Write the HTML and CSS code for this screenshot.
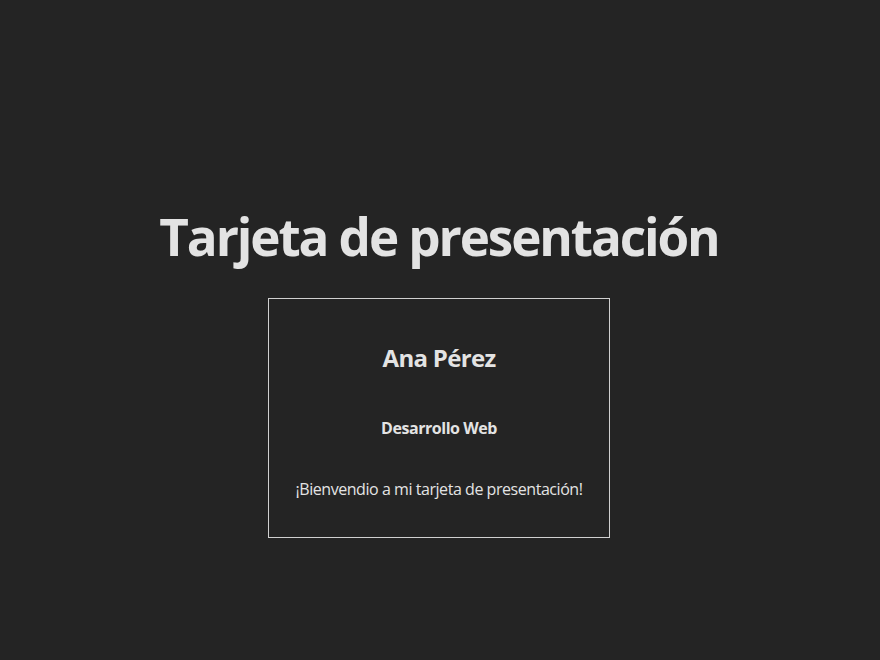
FILE: index.html
```html
<!DOCTYPE html>
<html lang="es">
<head>
<meta charset="utf-8">
<title>Tarjeta de presentación</title>
<link rel="stylesheet" href="styles.css">
</head>
<body>
<main class="page">
  <h1 class="title">Tarjeta de presentación</h1>
  <section class="card">
    <h2 class="card-name">Ana Pérez</h2>
    <h4 class="card-role">Desarrollo Web</h4>
    <p class="card-text">¡Bienvendio a mi tarjeta de presentación!</p>
  </section>
</main>
</body>
</html>
```

FILE: styles.css
```css
html, body {
  margin: 0;
  padding: 0;
  background: #242424;
}
body {
  font-family: "Open Sans", "Noto Sans", sans-serif;
  color: #e3e3e3;
  min-height: 100vh;
}
.page {
  display: flex;
  flex-direction: column;
  align-items: center;
  padding: 208px 2px 0 0;
  text-align: center;
}
.title {
  margin: 0 0 34px;
  font-size: 51.2px;
  line-height: 56px;
  font-weight: 700;
  letter-spacing: -2.1px;
}
.card {
  width: 300px;
  padding: 20px;
  border: 1px solid #d0d0d0;
}
.card-name {
  margin: 21px 0 40px;
  font-size: 24px;
  line-height: 36px;
  font-weight: 700;
  letter-spacing: -0.7px;
}
.card-role {
  margin: 0 0 37px;
  font-size: 16px;
  line-height: 24px;
  font-weight: 700;
  letter-spacing: -0.45px;
}
.card-text {
  margin: 0 0 16px;
  font-size: 16px;
  line-height: 24px;
  letter-spacing: -0.45px;
}
```
